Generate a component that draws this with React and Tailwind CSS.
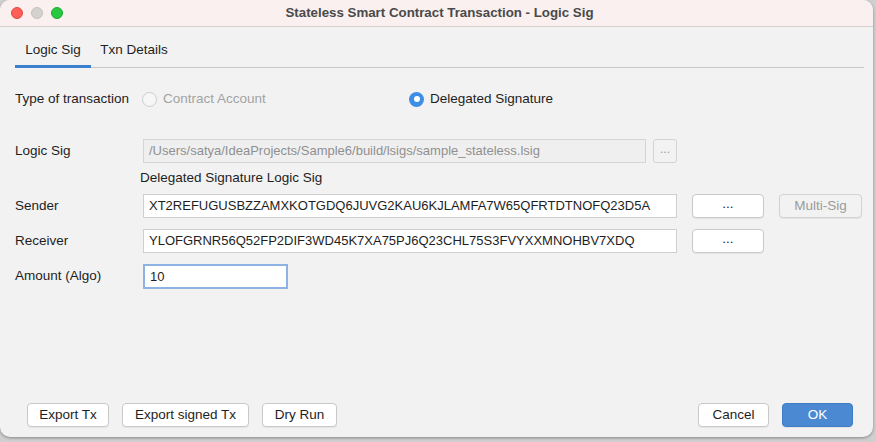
import React, { useState } from 'react';

const font = { fontFamily: '"Liberation Sans", Arial, sans-serif' };

const Btn = ({ children, className = '', primary, disabled }) => (
  <button
    disabled={disabled}
    className={
      'h-[24px] rounded-[4px] border text-[13.5px] leading-none flex items-center justify-center shadow-[0_1px_1px_rgba(0,0,0,0.06)] ' +
      (primary
        ? 'bg-[#4b8ad3] border-[#3f7dc5] text-white '
        : disabled
        ? 'bg-[#f2f2f2] border-[#d2d2d2] text-[#9b9b9b] '
        : 'bg-white border-[#c9c9c9] text-[#1e1e1e] ') +
      className
    }
  >
    {children}
  </button>
);

const Radio = ({ checked, disabled, label }) => (
  <div className="flex items-center gap-[6px]">
    {checked ? (
      <span className="w-[15px] h-[15px] rounded-full bg-[#3d8fe6] flex items-center justify-center">
        <span className="w-[6px] h-[6px] rounded-full bg-white" />
      </span>
    ) : (
      <span className="w-[15px] h-[15px] rounded-full border border-[#cdcdcd] bg-[#f6f6f6]" />
    )}
    <span className={disabled ? 'text-[#a3a3a3]' : 'text-[#1e1e1e]'}>{label}</span>
  </div>
);

const Field = ({ value, className = '', disabled, focused }) => (
  <div
    className={
      'h-[24px] flex items-center px-[5px] text-[13px] ' +
      (disabled
        ? 'bg-[#efefef] border border-[#d5d5d5] text-[#8f8f8f] '
        : focused
        ? 'bg-white border-2 border-[#8db2e4] px-[4px] text-[#1e1e1e] '
        : 'bg-white border border-[#cfcfcf] text-[#1e1e1e] ') +
      className
    }
  >
    {value}
  </div>
);

export default function App() {
  const [tab, setTab] = useState(0);
  return (
    <div className="w-[876px] h-[442px] bg-[#cfcfcf] overflow-hidden" style={font}>
      <div className="w-[873px] h-[437px] bg-[#f2f2f2] rounded-[10px] overflow-hidden flex flex-col shadow-[0_1px_3px_rgba(0,0,0,0.35)] text-[13.5px] text-[#1e1e1e]">
        {/* Title bar */}
        <div className="h-[27px] shrink-0 bg-[#f9f0ef] border-b border-[#d3cfcf] flex items-center relative">
          <div className="flex items-center gap-[8px] pl-[11px]">
            <span className="w-[12px] h-[12px] rounded-full bg-[#fe5f57] border border-[#e14942]" />
            <span className="w-[12px] h-[12px] rounded-full bg-[#d5d1d1] border border-[#c4bfbf]" />
            <span className="w-[12px] h-[12px] rounded-full bg-[#28c840] border border-[#1ea932]" />
          </div>
          <div className="absolute inset-0 flex items-center justify-center font-bold text-[13.3px] text-[#4a4a4a] pl-[6px]">
            Stateless Smart Contract Transaction - Logic Sig
          </div>
        </div>

        {/* Tabs */}
        <div className="mt-[8px] ml-[15px] w-[849px] flex items-end border-b border-[#c8c8c8]">
          {['Logic Sig', 'Txn Details'].map((t, i) => (
            <div
              key={t}
              onClick={() => setTab(i)}
              className={
                'h-[33px] -mb-px flex items-center justify-center cursor-default ' +
                (i === 0 ? 'w-[76px] ' : 'w-[86px] ') +
                (tab === i ? 'border-b-[3px] border-[#3b7fcf]' : 'border-b-[3px] border-transparent')
              }
            >
              {t}
            </div>
          ))}
        </div>

        {/* Form */}
        <div className="pl-[15px] flex flex-col">
          <div className="mt-[19px] h-[24px] flex items-center">
            <div className="w-[127px]">Type of transaction</div>
            <div className="w-[267px]">
              <Radio disabled label="Contract Account" />
            </div>
            <Radio checked label="Delegated Signature" />
          </div>

          <div className="mt-[28px] h-[24px] flex items-center">
            <div className="w-[128px]">Logic Sig</div>
            <Field disabled value="/Users/satya/IdeaProjects/Sample6/build/lsigs/sample_stateless.lsig" className="w-[503px]" />
            <button className="ml-[7px] w-[24px] h-[24px] rounded-[3px] border border-[#d3d3d3] bg-[#f2f2f2] text-[#9b9b9b] text-[12px] leading-none pb-[4px]">
              ...
            </button>
          </div>

          <div className="mt-[7px] h-[16px] flex items-center pl-[125px]">Delegated Signature Logic Sig</div>

          <div className="mt-[8px] h-[24px] flex items-center">
            <div className="w-[128px]">Sender</div>
            <Field value="XT2REFUGUSBZZAMXKOTGDQ6JUVG2KAU6KJLAMFA7W65QFRTDTNOFQ23D5A" className="w-[534px]" />
            <Btn className="ml-[15px] w-[72px] pb-[4px]">...</Btn>
            <Btn disabled className="ml-[15px] w-[83px]">Multi-Sig</Btn>
          </div>

          <div className="mt-[11px] h-[24px] flex items-center">
            <div className="w-[128px]">Receiver</div>
            <Field value="YLOFGRNR56Q52FP2DIF3WD45K7XA75PJ6Q23CHL75S3FVYXXMNOHBV7XDQ" className="w-[534px]" />
            <Btn className="ml-[15px] w-[72px] pb-[4px]">...</Btn>
          </div>

          <div className="mt-[11px] h-[25px] flex items-center">
            <div className="w-[128px]">Amount (Algo)</div>
            <Field focused value="10" className="w-[145px] h-[25px]" />
          </div>
        </div>

        {/* Bottom buttons */}
        <div className="mt-auto mb-[10px] px-[27px] flex items-center">
          <Btn className="w-[82px]">Export Tx</Btn>
          <Btn className="ml-[13px] w-[127px]">Export signed Tx</Btn>
          <Btn className="ml-[13px] w-[75px]">Dry Run</Btn>
          <Btn className="ml-auto w-[71px]">Cancel</Btn>
          <Btn primary className="ml-[13px] w-[71px] mr-[-7px]">OK</Btn>
        </div>
      </div>
    </div>
  );
}
